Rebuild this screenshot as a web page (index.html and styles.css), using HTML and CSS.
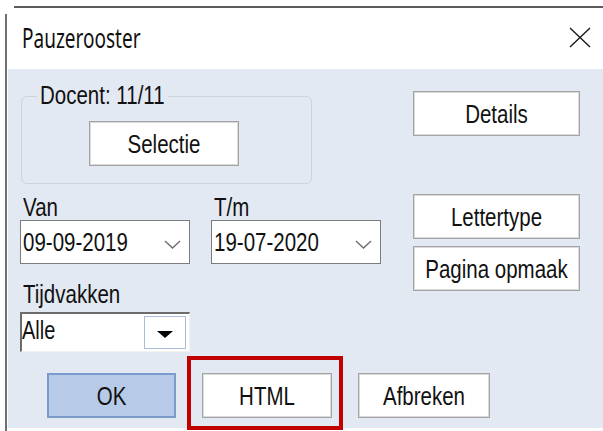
FILE: index.html
```html
<!DOCTYPE html>
<html lang="nl">
<head>
<meta charset="utf-8">
<title>Pauzerooster</title>
<link rel="stylesheet" href="styles.css">
</head>
<body>
<div class="screen">
  <div class="edge-top"></div>
  <div class="stage">
    <div class="edge-left"></div>
    <div class="dialog">
      <div class="titlebar">
        <span class="title"><span class="t t-title">Pauzerooster</span></span>
        <svg class="close" viewBox="0 0 22 21" width="22" height="21">
          <path d="M1 1 L21 20 M21 1 L1 20" stroke="#1a1a1a" stroke-width="1.4" fill="none"/>
        </svg>
      </div>
      <div class="client">
        <div class="panes">
          <div class="left">
            <fieldset class="group">
              <legend class="group-label"><span class="t">Docent: 11/11</span></legend>
              <button class="btn btn-selectie"><span class="t">Selectie</span></button>
            </fieldset>
            <div class="dates">
              <div class="field">
                <div class="label"><span class="t">Van</span></div>
                <div class="date">
                  <span class="t">09-09-2019</span>
                  <svg class="chevron" viewBox="0 0 17 9" width="17" height="9"><path d="M1 1 L8.5 8 L16 1" fill="none" stroke="#6a6a6a" stroke-width="1.3"/></svg>
                </div>
              </div>
              <div class="field">
                <div class="label"><span class="t">T/m</span></div>
                <div class="date">
                  <span class="t">19-07-2020</span>
                  <svg class="chevron" viewBox="0 0 17 9" width="17" height="9"><path d="M1 1 L8.5 8 L16 1" fill="none" stroke="#6a6a6a" stroke-width="1.3"/></svg>
                </div>
              </div>
            </div>
            <div class="label label-tijd"><span class="t">Tijdvakken</span></div>
            <div class="combo">
              <span class="combo-text"><span class="t">Alle</span></span>
              <span class="combo-btn">
                <svg viewBox="0 0 16 7" width="16" height="7"><path d="M0 0 H16 L8 7 Z" fill="#000"/></svg>
              </span>
            </div>
          </div>
          <div class="right">
            <button class="btn btn-side btn-details"><span class="t">Details</span></button>
            <button class="btn btn-side btn-font"><span class="t">Lettertype</span></button>
            <button class="btn btn-side btn-page"><span class="t">Pagina opmaak</span></button>
          </div>
        </div>
        <div class="actions">
          <button class="btn btn-ok"><span class="t">OK</span></button>
          <span class="mark">
            <button class="btn btn-html"><span class="t">HTML</span></button>
            <span class="highlight"></span>
          </span>
          <button class="btn btn-cancel"><span class="t">Afbreken</span></button>
        </div>
      </div>
    </div>
  </div>
</div>
</body>
</html>
```

FILE: styles.css
```css
* { box-sizing: border-box; }

body {
  margin: 0;
  background: #fff;
  font-family: "Liberation Sans", Arial, sans-serif;
  font-size: 20.5px;
  color: #111;
}

/* dialog text is drawn tall and narrow */
.t {
  display: inline-block;
  transform: scaleY(1.3);
  white-space: nowrap;
}

.t-title { transform: scaleY(1.4); }

.screen {
  width: 603px;
  height: 431px;
  overflow: hidden;
  position: relative;
}

/* edges of the window behind the dialog */
.edge-top {
  height: 2px;
  margin: 6px 0 0 14px;
  background: #5c5c5c;
}

.stage {
  display: flex;
  margin-top: 4px;
  height: 419px;
}

.edge-left {
  width: 2px;
  margin: 2px 0 0 5px;
  background: #707070;
}

.dialog {
  flex: 1;
  margin-left: 1px;
  display: flex;
  flex-direction: column;
}

.titlebar {
  height: 57px;
  background: #fff;
  display: flex;
  justify-content: space-between;
  align-items: flex-start;
  padding: 15px 12px 0 14px;
}

.title {
  font-family: "Noto Sans", "Liberation Sans", sans-serif;
  font-size: 19px;
  line-height: 22px;
  color: #111;
}

.close { display: block; }

.client {
  height: 359px;
  background: #e3e9f2;
  display: flex;
  flex-direction: column;
  padding-left: 12px;
}

.panes {
  display: flex;
  gap: 31px;
}

.left {
  width: 362px;
  display: flex;
  flex-direction: column;
  align-items: flex-start;
}

/* buttons */
.btn {
  font: inherit;
  color: #111;
  margin: 0;
  padding: 0;
  background: #fff;
  border: 1px solid #a4a4a4;
  box-shadow: inset 0 0 0 1px #dadada;
  display: flex;
  align-items: center;
  justify-content: center;
  height: 45px;
}

/* group box */
.group {
  margin: 17px 0 0 1px;
  width: 291px;
  min-width: 0;
  padding: 0 0 17px 0;
  border: 1px solid #cdd3db;
  border-radius: 6px;
}

.group-label {
  margin-left: 15px;
  padding: 0 3px;
  height: 20px;
  line-height: 18px;
}

.btn-selectie {
  width: 150px;
  margin: 15px 0 0 67px;
}

/* date pickers */
.dates {
  display: flex;
  gap: 21px;
  margin-top: 12px;
}

.field { width: 170px; }

.label {
  height: 24px;
  line-height: 22px;
  padding-left: 3px;
}

.date {
  width: 170px;
  height: 44px;
  background: #fff;
  border: 1px solid #7c7c7c;
  display: flex;
  align-items: center;
  justify-content: space-between;
  padding: 0 8px 0 2px;
}

.chevron { display: block; margin-top: 4px; }

.label-tijd { margin-top: 19px; }

/* combo box */
.combo {
  margin-top: 5px;
  width: 170px;
  height: 40px;
  background: #fff;
  border-style: solid;
  border-width: 2px 1px 1px 2px;
  border-color: #6c6c6c #f2f2f2 #f2f2f2 #6c6c6c;
  display: flex;
  align-items: flex-start;
  justify-content: space-between;
  padding: 2px 3px 0 0;
}

.combo-text {
  font-size: 20px;
  line-height: 28px;
}

.combo-btn {
  width: 42px;
  height: 33px;
  border: 1px solid #a9bdda;
  background: #fff;
  display: flex;
  align-items: center;
  justify-content: center;
}

.combo-btn svg { display: block; margin-top: 3px; }

/* side buttons */
.right {
  width: 167px;
  display: flex;
  flex-direction: column;
}

.btn-side { width: 167px; }
.btn-details { margin-top: 22px; }
.btn-font { margin-top: 58px; }
.btn-page { margin-top: 7px; }

/* dialog buttons */
.actions {
  display: flex;
  gap: 26px;
  margin-top: 21px;
  padding-left: 27px;
}

.btn-ok {
  width: 129px;
  background: #b7cae7;
  border: 2px solid #7d9bca;
  box-shadow: none;
}

.btn-html { width: 130px; }
.btn-cancel { width: 132px; }

.mark {
  position: relative;
  display: flex;
}

.highlight {
  position: absolute;
  left: -15px;
  top: -17px;
  width: 156px;
  height: 74px;
  border: 4px solid #c10000;
  pointer-events: none;
}
```
